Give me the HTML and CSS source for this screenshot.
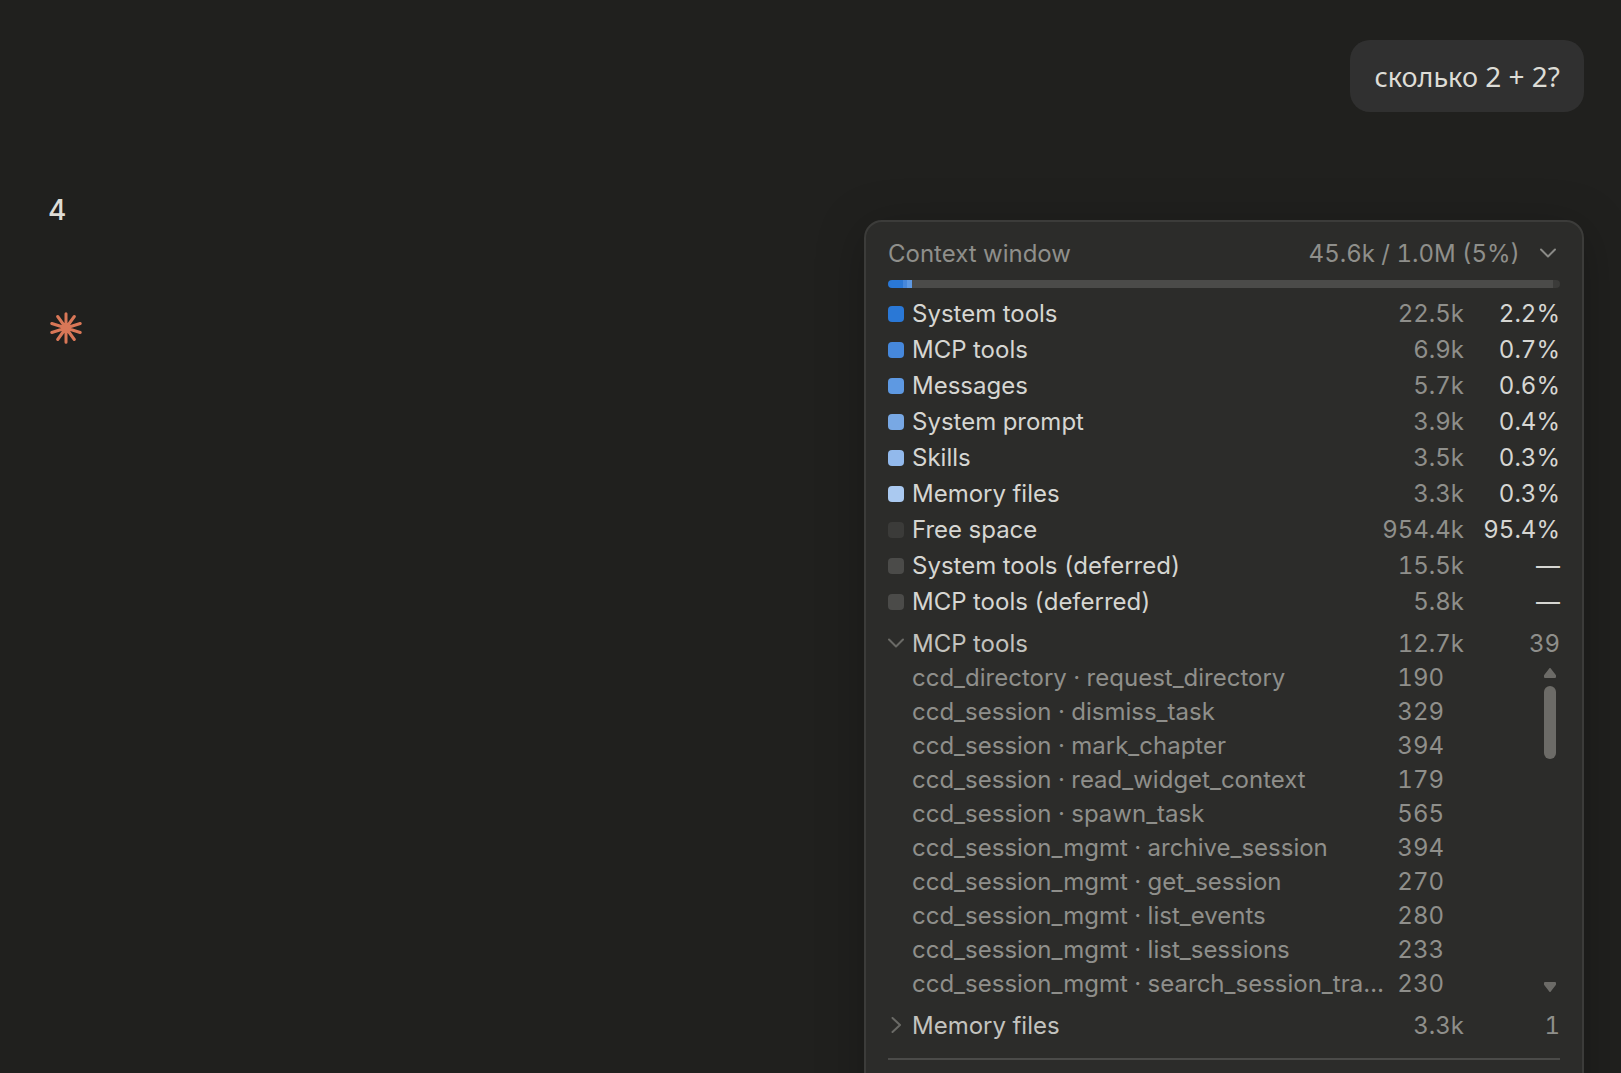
FILE: index.html
```html
<!DOCTYPE html>
<html lang="ru">
<head>
	<meta charset="UTF-8">
	<meta name="viewport" content="width=device-width, initial-scale=1.0">
	<title>Context window</title>
	<link rel="stylesheet" href="styles.css">
</head>
<body>
	<main class="chat">
		<div class="question"><span class="word">сколько</span> 2 + 2?</div>
		<p class="answer">4</p>
		<svg class="spark" viewBox="0 0 32 32" aria-hidden="true">
			<path d="M16 16V1.8M16 16V30.2M16 16L7.7 4.5M16 16L24.3 4.5M16 16L7.7 27.5M16 16L24.3 27.5M16 16L1.8 11.5M16 16L30.2 11.5M16 16L1.8 20.5M16 16L30.2 20.5"/>
			<circle cx="16" cy="16" r="5"/>
		</svg>
	</main>

	<section class="panel" lang="en">
		<button type="button" class="panel-head">
			<span>Context window</span>
			<span class="total">45.6k / 1.0M (5%)</span>
			<svg class="chevron" viewBox="0 0 16 16" aria-hidden="true"><path d="M1 4.500L8 11.500L15 4.500"/></svg>
		</button>
		<div class="bar">
			<span class="c1" style="width:2.2%"></span>
			<span class="c2" style="width:0.7%"></span>
			<span class="c3" style="width:0.6%"></span>
			<span class="deferred"></span>
			<span class="free" style="width:1%"></span>
		</div>

		<table class="usage">
			<tr><td class="key"><i class="c1"></i></td><td>System tools</td><td class="tokens">22.5k</td><td class="share">2.2%</td></tr>
			<tr><td class="key"><i class="c2"></i></td><td>MCP tools</td><td class="tokens">6.9k</td><td class="share">0.7%</td></tr>
			<tr><td class="key"><i class="c3"></i></td><td>Messages</td><td class="tokens">5.7k</td><td class="share">0.6%</td></tr>
			<tr><td class="key"><i class="c4"></i></td><td>System prompt</td><td class="tokens">3.9k</td><td class="share">0.4%</td></tr>
			<tr><td class="key"><i class="c5"></i></td><td>Skills</td><td class="tokens">3.5k</td><td class="share">0.3%</td></tr>
			<tr><td class="key"><i class="c6"></i></td><td>Memory files</td><td class="tokens">3.3k</td><td class="share">0.3%</td></tr>
			<tr><td class="key"><i class="free"></i></td><td>Free space</td><td class="tokens">954.4k</td><td class="share">95.4%</td></tr>
			<tr><td class="key"><i class="deferred"></i></td><td>System tools (deferred)</td><td class="tokens">15.5k</td><td class="share">—</td></tr>
			<tr><td class="key"><i class="deferred"></i></td><td>MCP tools (deferred)</td><td class="tokens">5.8k</td><td class="share">—</td></tr>
		</table>

		<button type="button" class="group" aria-expanded="true">
			<svg class="chevron" viewBox="0 0 16 16" aria-hidden="true"><path d="M1 4.500L8 11.500L15 4.500"/></svg>
			<span class="group-name">MCP tools</span>
			<span class="tokens">12.7k</span>
			<span class="count">39</span>
		</button>
		<div class="tools">
			<table class="tool-list">
				<tr><td>ccd_directory · request_directory</td><td class="tokens">190</td><td class="rest"></td></tr>
				<tr><td>ccd_session · dismiss_task</td><td class="tokens">329</td><td class="rest"></td></tr>
				<tr><td>ccd_session · mark_chapter</td><td class="tokens">394</td><td class="rest"></td></tr>
				<tr><td>ccd_session · read_widget_context</td><td class="tokens">179</td><td class="rest"></td></tr>
				<tr><td>ccd_session · spawn_task</td><td class="tokens">565</td><td class="rest"></td></tr>
				<tr><td>ccd_session_mgmt · archive_session</td><td class="tokens">394</td><td class="rest"></td></tr>
				<tr><td>ccd_session_mgmt · get_session</td><td class="tokens">270</td><td class="rest"></td></tr>
				<tr><td>ccd_session_mgmt · list_events</td><td class="tokens">280</td><td class="rest"></td></tr>
				<tr><td>ccd_session_mgmt · list_sessions</td><td class="tokens">233</td><td class="rest"></td></tr>
				<tr><td>ccd_session_mgmt · search_session_tra…</td><td class="tokens">230</td><td class="rest"></td></tr>
			</table>
			<div class="scroll">
				<svg class="arrow" viewBox="0 0 12 10" aria-hidden="true"><path d="M6 1L11 7.5V9H1V7.5Z"/></svg>
				<span class="thumb"></span>
				<svg class="arrow arrow-down" viewBox="0 0 12 10" aria-hidden="true"><path d="M6 9L11 2.5V1H1V2.5Z"/></svg>
			</div>
		</div>

		<button type="button" class="group" aria-expanded="false">
			<svg class="chevron" viewBox="0 0 16 16" aria-hidden="true"><path d="M4.500 1L12 8L4.500 15"/></svg>
			<span class="group-name">Memory files</span>
			<span class="tokens">3.3k</span>
			<span class="count">1</span>
		</button>
		<hr class="divider">
	</section>
</body>
</html>
```
FILE: styles.css
```css
* {
	box-sizing: border-box;
}
body {
	margin: 0;
	height: 100vh;
	overflow: hidden;
	background-color: #20201e;
	color: #dddcd6;
	font-family: Inter, "Noto Sans", sans-serif;
	font-size: 24px;
}
.chat {
	display: flex;
	flex-direction: column;
	align-items: flex-start;
	padding: 40px 37px 0 48px;
}
.question {
	align-self: flex-end;
	padding: 16px 24px;
	border-radius: 20px;
	background-color: #303030;
	font-family: "Noto Sans", sans-serif;
	font-size: 28px;
	line-height: 40px;
}
.word {
	font-size: 27px;
	line-height: 1;
}
.answer {
	margin: 78px 0 82px;
	font-size: 28px;
	font-weight: 500;
	line-height: 40px;
}
.spark {
	width: 32px;
	height: 32px;
	margin-left: 2px;
	fill: #d97757;
	stroke: #d97757;
	stroke-width: 3;
	stroke-linecap: round;
}
.spark circle {
	stroke: none;
}

/* popup over the chat */
.panel {
	position: absolute;
	top: 220px;
	right: 37px;
	width: 720px;
	padding: 13px 22px 64px;
	border: 2px solid #3c3c3a;
	border-radius: 18px;
	background-color: #2c2c2a;
	box-shadow: 0 8px 48px rgba(0,0,0,0.25);
	color: #d6d6d2;
	font-variant-numeric: tabular-nums;
}
button {
	display: flex;
	align-items: center;
	width: 100%;
	height: 36px;
	padding: 0;
	border: 0;
	background: none;
	font: inherit;
	font-variant-numeric: tabular-nums;
	text-align: left;
	cursor: pointer;
}
.panel-head {
	color: #8f8f8b;
}
.total {
	margin-left: auto;
}
.panel-head .chevron {
	margin: 0 4px 0 20px;
}
.chevron {
	flex: none;
	width: 16px;
	height: 16px;
	fill: none;
	stroke: #8a8a86;
	stroke-width: 2;
	stroke-linecap: round;
	stroke-linejoin: round;
}
.bar {
	display: flex;
	height: 8px;
	margin: 9px 0 8px;
	border-radius: 4px;
	overflow: hidden;
}
.bar .deferred {
	flex: 1;
}
.c1 { background-color: #2a78d6; }
.c2 { background-color: #4688dc; }
.c3 { background-color: #5e99e2; }
.c4 { background-color: #78a8e4; }
.c5 { background-color: #92b9ec; }
.c6 { background-color: #aac9f0; }
.free { background-color: #3b3b39; }
.deferred { background-color: #4b4b49; }

table {
	width: 100%;
	table-layout: fixed;
	border-collapse: collapse;
}
td {
	height: 36px;
	padding: 0;
	line-height: 36px;
	white-space: nowrap;
}
.key {
	width: 24px;
}
.key i {
	display: block;
	width: 16px;
	height: 16px;
	border-radius: 4px;
}
.tokens {
	width: 100px;
	color: #8f8f8b;
	text-align: right;
}
.share,
.count {
	width: 96px;
	text-align: right;
}

.group {
	margin-top: 5px;
	color: #c3c3bf;
}
.group .chevron {
	margin-right: 8px;
	stroke: #6a6a66;
}
.group-name {
	flex: 1;
}
.count {
	color: #8f8f8b;
}

.tools {
	display: flex;
	padding: 0 4px 1px 24px;
	color: #8f8f8b;
}
.tool-list td {
	height: 34px;
	line-height: 34px;
}
.tool-list .tokens {
	width: 48px;
}
.tool-list .rest {
	width: 100px;
}
.scroll {
	display: flex;
	flex-direction: column;
	flex: none;
	gap: 8px;
	width: 12px;
	padding: 7px 0 9px;
}
.arrow {
	width: 12px;
	height: 10px;
	fill: #6c6b67;
	stroke: #6c6b67;
	stroke-width: 2;
	stroke-linejoin: round;
}
.arrow-down {
	margin-top: auto;
}
.thumb {
	height: 73px;
	border-radius: 6px;
	background-color: #6c6b67;
}
.divider {
	height: 2px;
	margin: 15px 0 0;
	border: 0;
	background-color: #4b4b49;
}
```
